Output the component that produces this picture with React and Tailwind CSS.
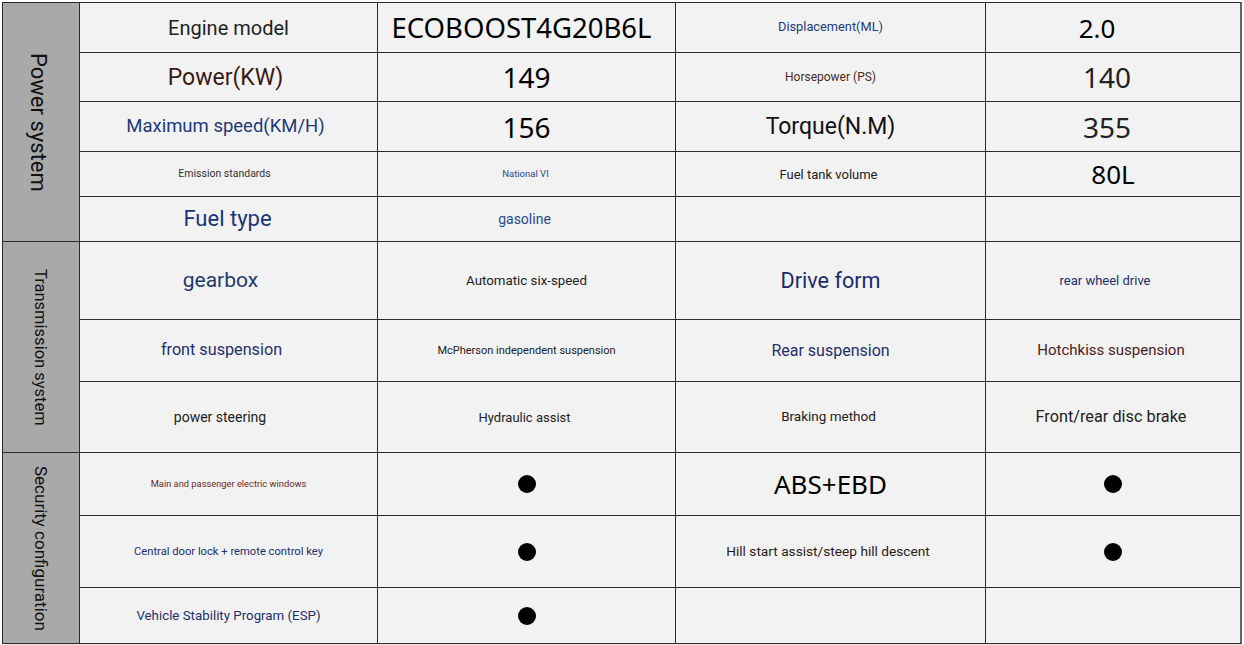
const label = "font-['Roboto',sans-serif]";
const num = "font-['Noto_Sans','Open_Sans',sans-serif]";

function Dot() {
  return <span className="block h-[18px] w-[18px] rounded-full bg-black" />;
}

function Cell({ children, className = "" }) {
  return (
    <div className={`flex items-center justify-center bg-[#f2f2f2] text-center leading-none ${className}`}>
      {children}
    </div>
  );
}

function Side({ children, rows, className = "" }) {
  return (
    <div
      className={`flex items-center justify-center bg-[#a9a9a9] text-[#111] ${label} ${rows} ${className}`}
    >
      <span className="[writing-mode:vertical-rl] whitespace-nowrap">{children}</span>
    </div>
  );
}

export default function App() {
  return (
    <div className="h-[645px] w-[1244px] overflow-hidden bg-white pl-[2px] pt-[2px]">
      <div className="grid w-[1240px] grid-cols-[76px_297px_297px_309px_1fr] grid-rows-[49px_48px_49px_44px_44px_77px_61px_70px_62px_71px_55px] gap-px border border-[#2b2b2b] border-r-2 border-r-[#666] bg-[#2b2b2b]">
        <Side rows="row-span-5" className="pr-[6px] text-[22px]">Power system</Side>
        <Cell className={`${label} text-[20px] text-[#222]`}>Engine model</Cell>
        <Cell className={`${num} text-[27.5px] text-black`}>
          <span className="-ml-[10px]">ECOBOOST4G20B6L</span>
        </Cell>
        <Cell className={`${label} text-[12.8px] text-[#1f3a7a]`}>Displacement(ML)</Cell>
        <Cell className={`${num} text-[26px] text-black`}>
          <span className="-ml-[32px]">2.0</span>
        </Cell>

        <Cell className={`${label} text-[23px] text-[#3a1a12]`}>
          <span className="-ml-[6px]">Power(KW)</span>
        </Cell>
        <Cell className={`${num} text-[28px] text-black`}>149</Cell>
        <Cell className={`${label} text-[12px] text-[#4a2a22]`}>Horsepower (PS)</Cell>
        <Cell className={`${num} text-[28px] text-[#222]`}>
          <span className="-ml-[12px]">140</span>
        </Cell>

        <Cell className={`${label} text-[18.5px] text-[#1e3a78]`}>
          <span className="-ml-[6px]">Maximum speed(KM/H)</span>
        </Cell>
        <Cell className={`${num} text-[28px] text-black`}>156</Cell>
        <Cell className={`${label} text-[23px] text-[#111]`}>Torque(N.M)</Cell>
        <Cell className={`${num} text-[28px] text-[#222]`}>
          <span className="-ml-[12px]">355</span>
        </Cell>

        <Cell className={`${label} text-[10.5px] text-[#333]`}>
          <span className="-ml-[8px]">Emission standards</span>
        </Cell>
        <Cell className={`${label} text-[9.5px] text-[#2b4a8a]`}>
          <span className="-ml-[2px]">National VI</span>
        </Cell>
        <Cell className={`${label} text-[13px] text-[#222]`}>
          <span className="-ml-[4px]">Fuel tank volume</span>
        </Cell>
        <Cell className={`${num} text-[26px] text-black`}>80L</Cell>

        <Cell className={`${label} text-[22px] text-[#1b3479]`}>
          <span className="-ml-[2px]">Fuel type</span>
        </Cell>
        <Cell className={`${label} text-[14px] text-[#2b4a8a]`}>
          <span className="-ml-[4px]">gasoline</span>
        </Cell>
        <Cell />
        <Cell />

        <Side rows="row-span-3" className="pr-[2px] text-[16.5px]">Transmission system</Side>
        <Cell className={`${label} text-[21px] text-[#1e3a6a]`}>
          <span className="-ml-[16px]">gearbox</span>
        </Cell>
        <Cell className={`${label} text-[13.3px] text-[#222]`}>Automatic six-speed</Cell>
        <Cell className={`${label} text-[21.6px] text-[#1a2b6b]`}>Drive form</Cell>
        <Cell className={`${label} text-[13px] text-[#1f2f6b]`}>
          <span className="-ml-[16px]">rear wheel drive</span>
        </Cell>

        <Cell className={`${label} text-[16.2px] text-[#1f2f6b]`}>
          <span className="-ml-[14px]">front suspension</span>
        </Cell>
        <Cell className={`${label} text-[11px] text-[#222]`}>McPherson independent suspension</Cell>
        <Cell className={`${label} text-[16px] text-[#1f2f6b]`}>Rear suspension</Cell>
        <Cell className={`${label} text-[15px] text-[#4a2020]`}>
          <span className="-ml-[4px]">Hotchkiss suspension</span>
        </Cell>

        <Cell className={`${label} text-[14px] text-[#222]`}>
          <span className="-ml-[17px]">power steering</span>
        </Cell>
        <Cell className={`${label} text-[13px] text-[#222]`}>
          <span className="-ml-[4px]">Hydraulic assist</span>
        </Cell>
        <Cell className={`${label} text-[13.5px] text-[#222]`}>
          <span className="-ml-[4px]">Braking method</span>
        </Cell>
        <Cell className={`${label} text-[16.3px] text-[#222]`}>
          <span className="-ml-[4px]">Front/rear disc brake</span>
        </Cell>

        <Side rows="row-span-3" className="pr-[2px] text-[17px]">Security configuration</Side>
        <Cell className={`${label} text-[9.3px] text-[#6a2a20]`}>Main and passenger electric windows</Cell>
        <Cell><Dot /></Cell>
        <Cell className={`${num} text-[26px] text-black`}>ABS+EBD</Cell>
        <Cell><Dot /></Cell>

        <Cell className={`${label} text-[11.2px] text-[#1f2f6b]`}>Central door lock + remote control key</Cell>
        <Cell><Dot /></Cell>
        <Cell className={`${label} text-[13.7px] text-[#2a1a1a]`}>
          <span className="-ml-[5px]">Hill start assist/steep hill descent</span>
        </Cell>
        <Cell><Dot /></Cell>

        <Cell className={`${label} text-[13.3px] text-[#1f2f6b]`}>Vehicle Stability Program (ESP)</Cell>
        <Cell><Dot /></Cell>
        <Cell />
        <Cell />
      </div>
      <div className="h-[4px] w-[1240px] bg-[#e9e5cf]" />
    </div>
  );
}
